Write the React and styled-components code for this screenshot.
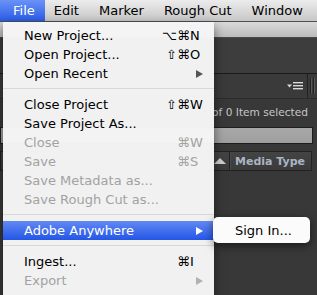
import styled, { createGlobalStyle } from 'styled-components'

const GlobalStyle = createGlobalStyle`
  html, body {
    margin: 0;
    padding: 0;
  }
  body {
    width: 317px;
    height: 295px;
    overflow: hidden;
    background: #383838;
    font-family: "DejaVu Sans", "Liberation Sans", sans-serif;
  }
`

const Screen = styled.div`
  position: relative;
  width: 317px;
  height: 295px;
  overflow: hidden;
  display: flex;
  flex-direction: column;
  background: #383838;
`

const MenuBar = styled.div`
  height: 21px;
  display: flex;
  background: linear-gradient(#ececec, #c7c7c7);
  border-bottom: 1px solid #4f4f4f;
`

const MenuTitle = styled.div`
  display: flex;
  align-items: center;
  padding: 0 10px 0 ${(p) => (p.$first ? '13px' : '10px')};
  margin-right: ${(p) => (p.$first ? '-1px' : '0')};
  font-size: 13px;
  color: ${(p) => (p.$open ? '#fff' : '#000')};
  background: ${(p) => (p.$open ? 'linear-gradient(#6a92f6, #2a5de8)' : 'none')};
`

const TitleStrip = styled.div`
  height: 15px;
  background: linear-gradient(#dadada, #bcbcbc);
  border-bottom: 1px solid #4a4a4a;
`

const TabArea = styled.div`
  height: 35px;
  background: #3d3d3d;
  border-bottom: 1px solid #1a1a1a;
`

const PanelBar = styled.div`
  height: 24px;
  display: flex;
  justify-content: flex-end;
  align-items: stretch;
  padding-right: 1px;
  background: #3a3a3a;
  border-bottom: 1px solid #2c2c2c;
`

const BarIcon = styled.div`
  display: flex;
  align-items: center;
  margin-right: ${(p) => p.$gap}px;
`

const BarDivider = styled.div`
  width: 1px;
  background: #222;
  margin-right: 2px;
`

const InfoRow = styled.div`
  height: 25px;
  display: flex;
  align-items: center;
  justify-content: flex-end;
  padding-right: 9px;
  font-size: 10.6px;
  color: #c6c6c6;
`

const SearchField = styled.div`
  height: 15px;
  margin: 3px 4px 0 0;
  background: linear-gradient(#a8a8a8, #9f9f9f);
  border: 1px solid #1e1e1e;
`

const HeaderRow = styled.div`
  height: 18px;
  margin: 7px 5px 0 0;
  display: flex;
  background: linear-gradient(#444, #3b3b3b);
  border: 1px solid #222;
`

const NameCell = styled.div`
  flex: 1;
  display: flex;
  align-items: center;
  justify-content: flex-end;
  padding-right: 3px;
  border-right: 1px solid #222;
`

const SortArrow = styled.div`
  width: 0;
  height: 0;
  border-left: 6px solid transparent;
  border-right: 6px solid transparent;
  border-bottom: 6px solid #cfcfcf;
`

const TypeCell = styled.div`
  width: 76px;
  display: flex;
  align-items: center;
  padding-left: 4px;
  font-size: 11px;
  font-weight: bold;
  color: #aab4c2;
  border-left: 1px solid #4a4a4a;
`

const Menu = styled.div`
  position: absolute;
  left: 3px;
  top: 22px;
  width: 211px;
  padding: 4px 0 10px;
  background: rgba(245, 245, 245, 0.98);
  box-shadow: 0 4px 10px rgba(0, 0, 0, 0.5);
  z-index: 1;
`

const Item = styled.div`
  height: 19px;
  display: flex;
  align-items: center;
  justify-content: space-between;
  padding: 0 11px 0 21px;
  font-size: 13px;
  white-space: nowrap;
  color: ${(p) => (p.$active ? '#fff' : p.$disabled ? '#a2a2a2' : '#000')};
  background: ${(p) => (p.$active ? 'linear-gradient(#6289f3, #2356e6)' : 'none')};
`

const Separator = styled.div`
  height: 1px;
  margin: 5px 0 6px;
  background: #d8d8d8;
`

const Shortcut = styled.div`
  display: flex;
`

const Mods = styled.span`
  text-align: right;
`

const Key = styled.span`
  width: 13px;
  text-align: left;
`

const SubArrow = styled.div`
  width: 0;
  height: 0;
  border-top: 4.5px solid transparent;
  border-bottom: 4.5px solid transparent;
  border-left: 7px solid ${(p) => p.$color};
`

const SubMenu = styled.div`
  position: absolute;
  left: 213px;
  top: 217px;
  width: 97px;
  padding: 4px 0 3px;
  border-radius: 5px;
  background: #fbfbfb;
  box-shadow: 0 3px 9px rgba(0, 0, 0, 0.55);
  z-index: 2;
`

const SubItem = styled.div`
  height: 19px;
  display: flex;
  align-items: center;
  padding-left: 22px;
  font-size: 13px;
  color: #000;
`

const items = [
  { label: 'New Project...', mods: '⌥⌘', key: 'N' },
  { label: 'Open Project...', mods: '⇧⌘', key: 'O' },
  { label: 'Open Recent', sub: true },
  { sep: true },
  { label: 'Close Project', mods: '⇧⌘', key: 'W' },
  { label: 'Save Project As...' },
  { label: 'Close', mods: '⌘', key: 'W', disabled: true },
  { label: 'Save', mods: '⌘', key: 'S', disabled: true },
  { label: 'Save Metadata as...', disabled: true },
  { label: 'Save Rough Cut as...', disabled: true },
  { sep: true },
  { label: 'Adobe Anywhere', sub: true, active: true },
  { sep: true },
  { label: 'Ingest...', mods: '⌘', key: 'I' },
  { label: 'Export', sub: true, disabled: true },
]

function arrowColor(item) {
  if (item.active) return '#fff'
  if (item.disabled) return '#b0b0b0'
  return '#555'
}

function PanelMenuIcon() {
  return (
    <svg width="16" height="10" viewBox="0 0 16 10">
      <path d="M0 3.5h5L2.5 6.5z" fill="#d8d8d8" />
      <rect x="6" y="1" width="10" height="1.4" fill="#d8d8d8" />
      <rect x="6" y="4" width="10" height="1.4" fill="#d8d8d8" />
      <rect x="6" y="7" width="10" height="1.4" fill="#d8d8d8" />
    </svg>
  )
}

function Grip() {
  return (
    <svg width="6" height="18" viewBox="0 0 6 18">
      <rect x="0" y="1" width="1" height="16" fill="#222" />
      <rect x="1" y="1" width="1" height="16" fill="#5a5a5a" />
      <rect x="3" y="1" width="1" height="16" fill="#222" />
      <rect x="4" y="1" width="1" height="16" fill="#5a5a5a" />
    </svg>
  )
}

export default function App() {
  return (
    <Screen>
      <GlobalStyle />
      <MenuBar>
        <MenuTitle $first $open>File</MenuTitle>
        <MenuTitle>Edit</MenuTitle>
        <MenuTitle>Marker</MenuTitle>
        <MenuTitle>Rough Cut</MenuTitle>
        <MenuTitle>Window</MenuTitle>
      </MenuBar>

      <TitleStrip />
      <TabArea />
      <PanelBar>
        <BarIcon $gap={4}>
          <PanelMenuIcon />
        </BarIcon>
        <BarDivider />
        <BarIcon $gap={0}>
          <Grip />
        </BarIcon>
      </PanelBar>
      <InfoRow>of 0 Item selected</InfoRow>
      <SearchField />
      <HeaderRow>
        <NameCell>
          <SortArrow />
        </NameCell>
        <TypeCell>Media Type</TypeCell>
      </HeaderRow>

      <Menu>
        {items.map((item, i) =>
          item.sep ? (
            <Separator key={i} />
          ) : (
            <Item key={i} $disabled={item.disabled} $active={item.active}>
              <span>{item.label}</span>
              {item.key && (
                <Shortcut>
                  <Mods>{item.mods}</Mods>
                  <Key>{item.key}</Key>
                </Shortcut>
              )}
              {item.sub && <SubArrow $color={arrowColor(item)} />}
            </Item>
          )
        )}
      </Menu>

      <SubMenu>
        <SubItem>Sign In...</SubItem>
      </SubMenu>
    </Screen>
  )
}
